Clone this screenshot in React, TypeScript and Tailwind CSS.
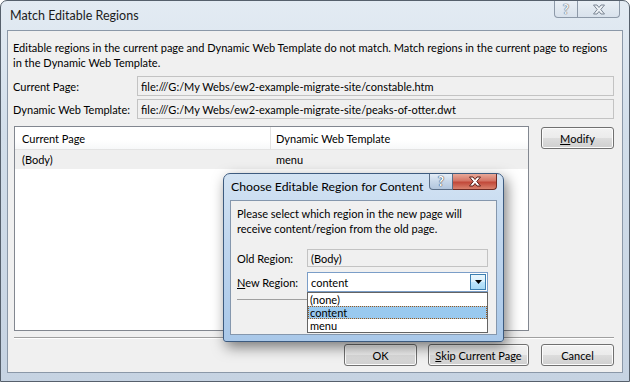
import React from "react";

const btn =
  "flex h-[22px] items-center justify-center rounded-[3px] border border-[#707070] bg-[linear-gradient(180deg,#f2f2f2_0%,#ebebeb_50%,#dddddd_50%,#cfcfcf_100%)] shadow-[inset_0_0_0_1px_#fcfcfc] text-black";

function CloseGlyph({ fill, stroke }: { fill: string; stroke: string }) {
  return (
    <svg width="14" height="11" viewBox="0 0 14 11">
      <path
        d="M1.5 1 H5 L7 3.5 L9 1 H12.5 L8.8 5.5 L12.5 10 H9 L7 7.5 L5 10 H1.5 L5.2 5.5 Z"
        fill={fill}
        stroke={stroke}
        strokeWidth="1"
        strokeLinejoin="round"
      />
    </svg>
  );
}

function Cursor() {
  return (
    <svg width="13" height="20" viewBox="0 0 13 20" className="absolute left-[435px] top-[313px]">
      <path
        d="M0.5 0.5 L0.5 16 L4.2 12.6 L6.8 18.6 L9.2 17.6 L6.6 11.8 L11.6 11.8 Z"
        fill="#ffffff"
        stroke="#000000"
        strokeWidth="1"
        strokeLinejoin="round"
      />
    </svg>
  );
}

function ChildDialog() {
  return (
    <div className="absolute left-[223px] top-[173px] flex h-[169px] w-[281px] flex-col rounded-t-[7px] rounded-b-[3px] border border-[#3d5b7f] bg-[linear-gradient(180deg,#d3e3f3_0%,#c0d6ee_40%,#a9c8e9_100%)] px-[6px] pb-[6px] shadow-[3px_5px_14px_rgba(0,0,0,0.5)]">
      <div className="flex h-[26px] items-start">
        <span className="pl-[1px] pt-[5px] text-[12.25px] leading-[16px] text-black">
          Choose Editable Region for Content
        </span>
        <div className="ml-auto flex h-[16px]">
          <div className="flex w-[24px] items-center justify-center rounded-bl-[4px] border border-t-0 border-[#5b6f88] bg-[linear-gradient(180deg,#e4edf7_0%,#c7d7e9_50%,#b2c6de_100%)] text-[13px] font-bold leading-none text-white [text-shadow:0_0_1px_#3d4d63,0_0_1px_#3d4d63,0_0_1px_#3d4d63]">
            ?
          </div>
          <div className="flex w-[44px] items-center justify-center rounded-br-[4px] border border-l-0 border-t-0 border-[#6e2b24] bg-[linear-gradient(180deg,#e8a898_0%,#d47566_45%,#c2493a_55%,#d9826e_100%)]">
            <CloseGlyph fill="#ffffff" stroke="#5a1f18" />
          </div>
        </div>
      </div>
      <div className="flex flex-1 flex-col border border-[#8597ad] bg-[#f0f0f0] pl-[6px] pr-[8px] pt-[5px] text-[11px] leading-[15px]">
        <p>
          Please select which region in the new page will
          <br />
          receive content/region from the old page.
        </p>
        <div className="mt-[13px] flex h-[18px] items-center">
          <span className="w-[70px]">Old Region:</span>
          <div className="flex h-full flex-1 items-center border border-[#c3c3c3] bg-[#f0f0f0] pl-[3px]">(Body)</div>
        </div>
        <div className="mt-[5px] flex h-[20px] items-center">
          <span className="w-[70px]">
            <span className="underline">N</span>ew Region:
          </span>
          <div className="relative flex h-full flex-1 items-center border border-[#7b9ec8] bg-white pl-[3px]">
            <span>content</span>
            <div className="ml-auto mr-[1px] flex h-[16px] w-[16px] items-center justify-center border border-[#3c7fb1] bg-[linear-gradient(180deg,#eaf6fd_0%,#d9f0fc_50%,#bee6fd_50%,#a7d9f5_100%)]">
              <svg width="7" height="4" viewBox="0 0 7 4">
                <path d="M0 0 H7 L3.5 4 Z" fill="#000" />
              </svg>
            </div>
            <div className="absolute left-[-1px] right-[-1px] top-[19px] z-10 flex flex-col border border-[#646464] bg-white leading-[13px]">
              <div className="h-[13px] pl-[2px]">(none)</div>
              <div className="h-[13px] border border-dotted border-[#9a5a1e] bg-[#99c9ef] pl-[1px] leading-[11px]">content</div>
              <div className="h-[13px] pl-[2px]">menu</div>
            </div>
          </div>
        </div>
        <div className="mt-[7px] h-[1px] w-[70px] bg-[#a0a0a0]" />
      </div>
    </div>
  );
}

export default function App() {
  return (
    <div className="relative h-[382px] w-[630px] overflow-hidden bg-white font-['Lato','Liberation_Sans',sans-serif] text-black">
      <div className="flex h-full flex-col rounded-t-[7px] border border-[#56606c] bg-[linear-gradient(180deg,#e3ebf3_0%,#d2deea_35%,#c6d3e2_100%)] px-[6px] pb-[8px]">
        <div className="flex h-[29px] items-start">
          <span className="pl-[3px] pt-[7px] text-[12.5px] leading-[16px] text-[#1b1b1b]">Match Editable Regions</span>
          <div className="ml-auto mr-[3px] flex h-[17px]">
            <div className="flex w-[24px] items-center justify-center rounded-bl-[4px] border border-t-0 border-[#8d99a8] bg-[linear-gradient(180deg,#e9eff5_0%,#d9e2ec_100%)] text-[13px] font-bold leading-none text-[#eef2f6] [text-shadow:0_0_1px_#6c7785,0_0_1px_#6c7785,0_0_1px_#6c7785]">
              ?
            </div>
            <div className="flex w-[42px] items-center justify-center rounded-br-[4px] border border-l-0 border-t-0 border-[#8d99a8] bg-[linear-gradient(180deg,#e9eff5_0%,#d9e2ec_100%)]">
              <CloseGlyph fill="#eef2f6" stroke="#7a8593" />
            </div>
          </div>
        </div>
        <div className="flex flex-1 flex-col border border-[#8b98a8] bg-[#f0f0f0] pl-[5px] pr-[8px] pt-[9px] text-[11px] leading-[15px]">
          <p className="whitespace-nowrap">
            Editable regions in the current page and Dynamic Web Template do not match. Match regions in the current page to regions
            <br />
            in the Dynamic Web Template.
          </p>
          <div className="mt-[6px] flex h-[20px] items-center">
            <span className="w-[124px]">Current Page:</span>
            <div className="flex h-full flex-1 items-center border border-[#c3c3c3] bg-[#f0f0f0] pl-[3px]">
              file:///G:/My Webs/ew2-example-migrate-site/constable.htm
            </div>
          </div>
          <div className="mt-[3px] flex h-[20px] items-center">
            <span className="w-[124px]">Dynamic Web Template:</span>
            <div className="flex h-full flex-1 items-center border border-[#c3c3c3] bg-[#f0f0f0] pl-[3px]">
              file:///G:/My Webs/ew2-example-migrate-site/peaks-of-otter.dwt
            </div>
          </div>
          <div className="mt-[7px] flex items-start justify-between pl-[1px]">
            <div className="h-[205px] w-[515px] border border-[#828790] bg-white">
              <div className="flex h-[23px] border-b border-[#e3e3e3] bg-[linear-gradient(180deg,#ffffff_0%,#ffffff_60%,#f7f8f9_100%)]">
                <div className="flex w-[256px] items-center border-r border-[#e3e3e3] pl-[7px]">Current Page</div>
                <div className="flex flex-1 items-center pl-[5px]">Dynamic Web Template</div>
              </div>
              <div className="flex h-[19px] bg-[#efefef]">
                <div className="flex w-[257px] items-center pl-[7px]">(Body)</div>
                <div className="flex flex-1 items-center pl-[4px]">menu</div>
              </div>
            </div>
            <button className={`${btn} mt-[1px] w-[73px]`}>
              <span className="underline">M</span>odify
            </button>
          </div>
          <div className="ml-[1px] mt-[6px] h-[2px] border-t border-b border-t-[#a0a0a0] border-b-white" />
          <div className="mt-[5px] flex justify-end gap-[11px]">
            <button className={`${btn} w-[73px]`}>OK</button>
            <button className={`${btn} w-[101px]`}>
              <span className="underline">S</span>kip Current Page
            </button>
            <button className={`${btn} ml-[1px] w-[73px]`}>Cancel</button>
          </div>
        </div>
      </div>
      <ChildDialog />
      <Cursor />
    </div>
  );
}
